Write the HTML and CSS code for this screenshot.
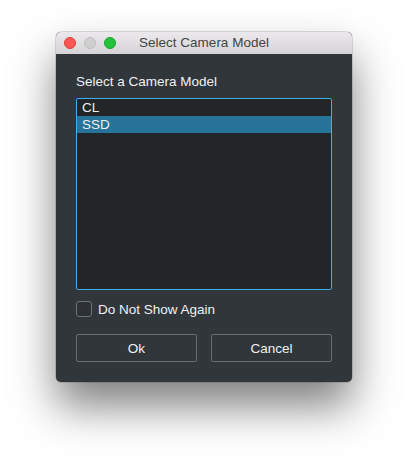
FILE: index.html
```html
<!DOCTYPE html>
<html>
<head>
<meta charset="utf-8">
<link rel="stylesheet" href="styles.css">
</head>
<body>
<div class="stage">
  <div class="window">
    <div class="titlebar">
      <div class="lights">
        <span class="light red"></span>
        <span class="light gray"></span>
        <span class="light green"></span>
      </div>
      <div class="title">Select Camera Model</div>
    </div>
    <div class="content">
      <div class="label">Select a Camera Model</div>
      <div class="list">
        <div class="row">CL</div>
        <div class="row selected">SSD</div>
      </div>
      <label class="check">
        <span class="box"></span>
        <span class="check-text">Do Not Show Again</span>
      </label>
      <div class="buttons">
        <div class="btn">Ok</div>
        <div class="btn">Cancel</div>
      </div>
    </div>
  </div>
</div>
</body>
</html>
```

FILE: styles.css
```css
html, body {
  margin: 0;
  padding: 0;
  background: #ffffff;
}
.stage {
  width: 408px;
  height: 462px;
  padding: 32px 0 0 56px;
  box-sizing: border-box;
  font-family: "Liberation Sans", Arial, sans-serif;
}
.window {
  width: 296px;
  border-radius: 5px;
  overflow: hidden;
  background: #31363b;
  box-shadow: 0 24px 44px rgba(0,0,0,0.5), 0 0 0 0.5px rgba(0,0,0,0.25);
}
.titlebar {
  height: 22px;
  position: relative;
  background: linear-gradient(#ebe9eb, #d5d3d5);
  display: flex;
  align-items: center;
  justify-content: center;
}
.lights {
  position: absolute;
  left: 8px;
  top: 5px;
  display: flex;
  gap: 8px;
}
.light {
  width: 12px;
  height: 12px;
  border-radius: 50%;
  box-sizing: border-box;
}
.red { background: #fc5753; border: 0.5px solid #df3d39; }
.gray { background: #d0cfd0; border: 0.5px solid #bdbcbd; }
.green { background: #24c33a; border: 0.5px solid #1aa42c; }
.title {
  font-size: 13.5px;
  color: #454545;
  line-height: 16px;
}
.content {
  padding: 20px 20px 20px 20px;
  display: flex;
  flex-direction: column;
  color: #eff0f1;
  font-size: 13.5px;
}
.label {
  line-height: 16px;
}
.list {
  margin-top: 8px;
  height: 192px;
  box-sizing: border-box;
  border: 1px solid #3daee9;
  border-radius: 2px;
  background: #232629;
}
.row {
  height: 17px;
  line-height: 17px;
  padding-left: 5px;
}
.row.selected {
  background: #287399;
}
.check {
  margin-top: 11px;
  display: flex;
  align-items: center;
  gap: 6px;
  height: 16px;
}
.box {
  width: 16px;
  height: 16px;
  box-sizing: border-box;
  border: 1px solid #6e7276;
  border-radius: 3px;
  background: #2d3136;
}
.check-text {
  line-height: 16px;
  padding-top: 1px;
}
.buttons {
  margin-top: 17px;
  display: grid;
  grid-template-columns: 1fr 1fr;
  gap: 14px;
}
.btn {
  height: 28px;
  box-sizing: border-box;
  border: 1px solid #6a6e72;
  border-radius: 2px;
  display: flex;
  align-items: center;
  justify-content: center;
  background: #31363b;
}
```
